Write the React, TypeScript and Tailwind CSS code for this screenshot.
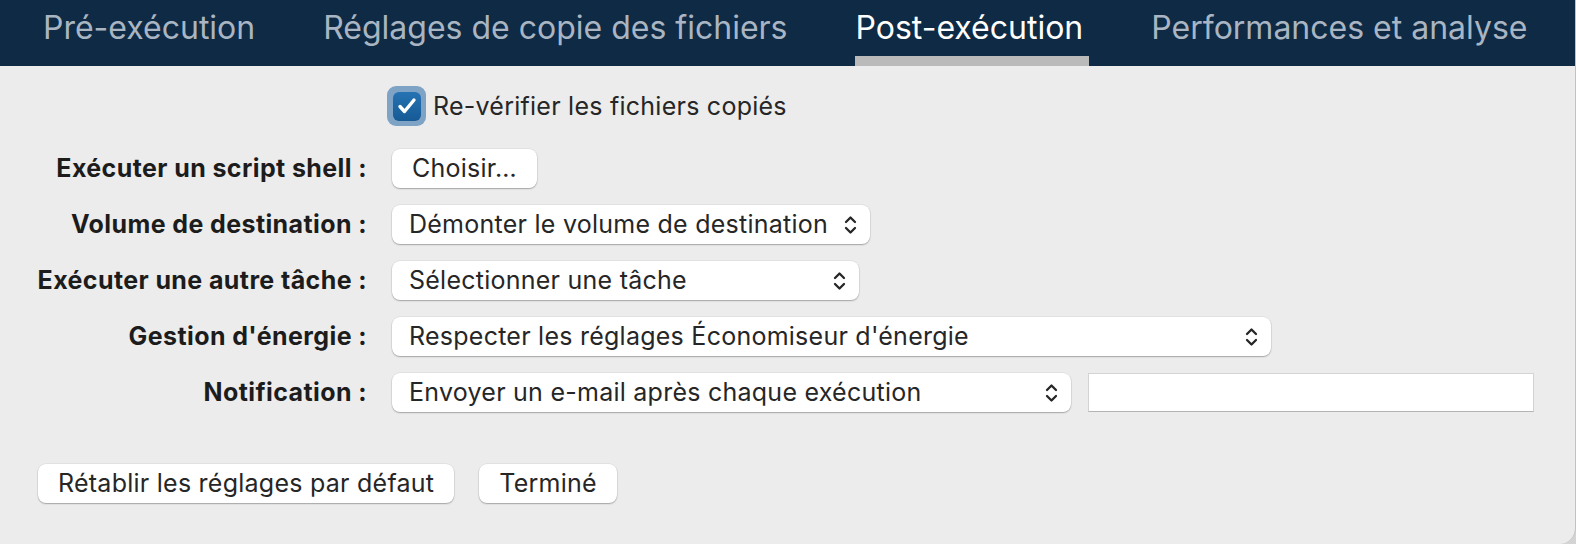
import React, { useState } from 'react';

const tabs = [
  'Pré-exécution',
  'Réglages de copie des fichiers',
  'Post-exécution',
  'Performances et analyse',
];

function Chevrons() {
  return (
    <svg width="15" height="22" viewBox="0 0 15 22" fill="none" className="shrink-0">
      <path d="M3 8 L7.5 3.5 L12 8" stroke="#262626" strokeWidth="2.3" strokeLinecap="round" strokeLinejoin="round" />
      <path d="M3 14 L7.5 18.5 L12 14" stroke="#262626" strokeWidth="2.3" strokeLinecap="round" strokeLinejoin="round" />
    </svg>
  );
}

function PopUp({ label, width }: { label: string; width: string }) {
  return (
    <div
      className={`${width} h-[39px] flex items-center justify-between pl-[17px] pr-[12px] bg-white rounded-[8px] shadow-[0_1px_1.5px_rgba(0,0,0,0.28),0_0_0_0.5px_rgba(0,0,0,0.08)] text-[#262626]`}
    >
      <span className="whitespace-nowrap">{label}</span>
      <Chevrons />
    </div>
  );
}

function PushButton({ children }: { children: React.ReactNode }) {
  return (
    <button className="h-[39px] px-[20px] bg-white rounded-[8px] shadow-[0_1px_1.5px_rgba(0,0,0,0.28),0_0_0_0.5px_rgba(0,0,0,0.08)] text-[#262626] whitespace-nowrap">
      {children}
    </button>
  );
}

export default function App() {
  const [active] = useState(2);
  const [verify, setVerify] = useState(true);

  const label = 'text-right font-bold text-[#1c1c1c] tracking-[0.4px] whitespace-nowrap';

  return (
    <div className="w-[1576px] h-[544px] bg-[#d4d4d4] font-['Inter','Noto_Sans',sans-serif] overflow-hidden">
      <div className="h-full flex flex-col bg-[#ececec] rounded-br-[16px] border-r border-[#c2c2c2]">
        {/* Tabs */}
        <div className="h-[66px] shrink-0 bg-[#0e2a44] flex items-end pl-[9px]">
          {tabs.map((t, i) => (
            <div key={t} className="flex flex-col items-center px-[34px]">
              <div
                className={`text-[32px] leading-none pb-[12px] whitespace-nowrap ${
                  i === active ? 'text-white' : 'text-[#a9b5c2]'
                }`}
              >
                {t}
              </div>
              <div className={`h-[10px] self-stretch -mr-[6px] ${i === active ? 'bg-[#bababa]' : ''}`} />
            </div>
          ))}
        </div>

        {/* Form */}
        <div className="flex-1 flex flex-col text-[25px] leading-none tracking-[0.25px]">
          <div className="grid grid-cols-[367px_1fr] gap-x-[20px] items-center pt-[20px]">
            <div />
            <label className="flex items-center gap-[7px] h-[40px]">
              <span className="w-[39px] h-[40px] rounded-[9px] bg-[#7fa3c4] flex items-center justify-center">
                <button
                  onClick={() => setVerify(!verify)}
                  className="w-[28px] h-[29px] rounded-[6px] bg-gradient-to-b from-[#2673b3] to-[#165a95] flex items-center justify-center"
                >
                  {verify && (
                    <svg width="22" height="20" viewBox="0 0 22 20" fill="none">
                      <path d="M4 10.5 L8.5 15.5 L18 4" stroke="white" strokeWidth="3.4" strokeLinecap="round" strokeLinejoin="round" />
                    </svg>
                  )}
                </button>
              </span>
              <span className="text-[#262626]">Re-vérifier les fichiers copiés</span>
            </label>
          </div>

          <div className="grid grid-cols-[367px_1fr] gap-x-[25px] gap-y-[17px] items-center mt-[23px]">
            <div className={label}>Exécuter un script shell :</div>
            <div>
              <PushButton>Choisir…</PushButton>
            </div>

            <div className={label}>Volume de destination :</div>
            <PopUp label="Démonter le volume de destination" width="w-[478px]" />

            <div className={label}>Exécuter une autre tâche :</div>
            <PopUp label="Sélectionner une tâche" width="w-[467px]" />

            <div className={label}>Gestion d'énergie :</div>
            <PopUp label="Respecter les réglages Économiseur d'énergie" width="w-[879px]" />

            <div className={label}>Notification :</div>
            <div className="flex items-center gap-[17px]">
              <PopUp label="Envoyer un e-mail après chaque exécution" width="w-[679px]" />
              <input
                className="w-[446px] h-[39px] bg-white border border-[#d3d3d3] border-b-[#b4b4b4] outline-none px-2"
                defaultValue=""
              />
            </div>
          </div>

          <div className="flex items-center gap-[25px] pl-[38px] mt-[52px]">
            <PushButton>Rétablir les réglages par défaut</PushButton>
            <PushButton>Terminé</PushButton>
          </div>
        </div>
      </div>
    </div>
  );
}
